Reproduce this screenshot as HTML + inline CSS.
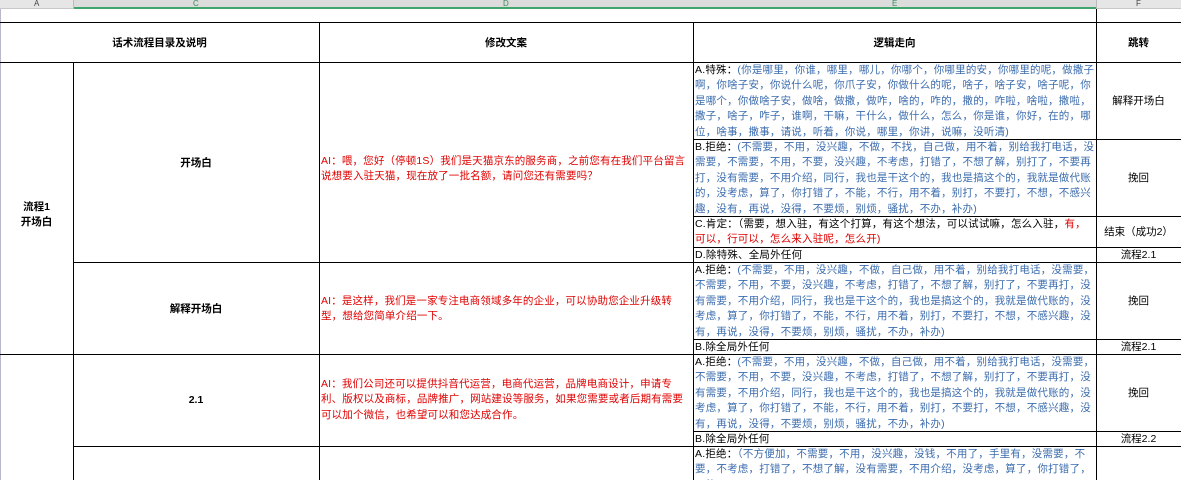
<!DOCTYPE html>
<html><head><meta charset="utf-8"><style>
*{margin:0;padding:0;box-sizing:border-box}
body{width:1181px;height:480px;overflow:hidden;background:#fff;font-family:"Liberation Sans","Noto Sans CJK SC",sans-serif;font-size:10.5px;color:#000;position:relative}
.a{position:absolute}
.h{position:absolute;height:1px;background:#000}
.v{position:absolute;width:1px;background:#000}
.c{position:absolute;display:flex;align-items:center;justify-content:center;text-align:center}
.e{position:absolute;left:695px;width:400px;line-height:15.4px;color:#3b6cae;letter-spacing:0.2px;overflow:hidden}
.k{color:#000}.r{color:#e00000}
.d{position:absolute;left:321px;width:370px;line-height:15.4px;color:#e00000;letter-spacing:0.15px}
b{font-weight:bold}
.hd{position:absolute;top:-1px;font-size:8px;line-height:9px}
</style></head><body>
<div class="a" style="left:0;top:0;width:1181px;height:9px;background:#e6e6e6;border-bottom:1px solid #c8c8c8"></div>
<div class="a" style="left:73px;top:0;width:1023px;height:9px;background:#dcdcdc;border-bottom:2px solid #3fa56a"></div>
<div class="hd" style="left:34px;color:#444">A</div>
<div class="hd" style="left:193px;color:#3a8a5a">C</div>
<div class="hd" style="left:503px;color:#3a8a5a">D</div>
<div class="hd" style="left:892px;color:#3a8a5a">E</div>
<div class="hd" style="left:1136px;color:#444">F</div>
<div class="v" style="left:1096px;top:0;height:9px;background:#bbb"></div>
<div class="v" style="left:73px;top:0;height:9px;background:#bbb"></div>
<div class="v" style="left:0;top:9px;height:471px;background:#b8b8cc"></div>

<div class="h" style="left:0;top:22px;width:1181px"></div>
<div class="h" style="left:0;top:62px;width:1181px"></div>
<div class="h" style="left:73px;top:262px;width:1108px"></div>
<div class="h" style="left:0;top:354px;width:1181px"></div>
<div class="h" style="left:73px;top:446px;width:1108px"></div>
<div class="h" style="left:693px;top:139px;width:488px"></div>
<div class="h" style="left:693px;top:216px;width:488px"></div>
<div class="h" style="left:693px;top:247px;width:488px"></div>
<div class="h" style="left:693px;top:339px;width:488px"></div>
<div class="h" style="left:693px;top:431px;width:488px"></div>
<div class="v" style="left:73px;top:62px;height:418px"></div>
<div class="v" style="left:319px;top:22px;height:458px"></div>
<div class="v" style="left:693px;top:22px;height:458px"></div>
<div class="v" style="left:1096px;top:9px;height:471px"></div>

<div class="c" style="left:0;top:22px;width:319px;height:40px"><b>话术流程目录及说明</b></div>
<div class="c" style="left:319px;top:22px;width:374px;height:40px"><b>修改文案</b></div>
<div class="c" style="left:693px;top:22px;width:403px;height:40px"><b>逻辑走向</b></div>
<div class="c" style="left:1096px;top:22px;width:85px;height:40px"><b>跳转</b></div>

<div class="c" style="left:0;top:62px;width:73px;height:306px;line-height:15px"><b>流程1<br>开场白</b></div>
<div class="c" style="left:73px;top:62px;width:246px;height:200px"><b>开场白</b></div>
<div class="c" style="left:73px;top:262px;width:246px;height:92px"><b>解释开场白</b></div>
<div class="c" style="left:73px;top:354px;width:246px;height:92px"><b>2.1</b></div>

<div class="d" style="top:154px">AI：喂，您好（停顿1S）我们是天猫京东的服务商，之前您有在我们平台留言说想要入驻天猫，现在放了一批名额，请问您还有需要吗？</div>
<div class="d" style="top:294px">AI：是这样，我们是一家专注电商领域多年的企业，可以协助您企业升级转型，想给您简单介绍一下。</div>
<div class="d" style="top:377px">AI：我们公司还可以提供抖音代运营，电商代运营，品牌电商设计，申请专利、版权以及商标，品牌推广，网站建设等服务，如果您需要或者后期有需要可以加个微信，也希望可以和您达成合作。</div>

<div class="e" style="top:63px"><span class="k">A.特殊：</span>(你是哪里，你谁，哪里，哪儿，你哪个，你哪里的安，你哪里的呢，做撒子啊，你啥子安，你说什么呢，你爪子安，你做什么的呢，啥子，啥子安，啥子呢，你是哪个，你做啥子安，做啥，做撒，做咋，啥的，咋的，撒的，咋啦，啥啦，撒啦，撒子，啥子，咋子，谁啊，干嘛，干什么，做什么，怎么，你是谁，你好，在的，哪位，啥事，撒事，请说，听着，你说，哪里，你讲，说嘛，没听清)</div>
<div class="e" style="top:140px"><span class="k">B.拒绝：</span>(不需要，不用，没兴趣，不做，不找，自己做，用不着，别给我打电话，没需要，不需要，不用，不要，没兴趣，不考虑，打错了，不想了解，别打了，不要再打，没有需要，不用介绍，同行，我也是干这个的，我也是搞这个的，我就是做代账的，没考虑，算了，你打错了，不能，不行，用不着，别打，不要打，不想，不感兴趣，没有，再说，没得，不要烦，别烦，骚扰，不办，补办)</div>
<div class="e k" style="top:217px">C.肯定：（需要，想入驻，有这个打算，有这个想法，可以试试嘛，怎么入驻，<span class="r">有，可以，行可以，怎么来入驻呢，怎么开)</span></div>
<div class="e k" style="top:248px">D.除特殊、全局外任何</div>
<div class="e" style="top:263px"><span class="k">A.拒绝：</span>(不需要，不用，没兴趣，不做，自己做，用不着，别给我打电话，没需要，不需要，不用，不要，没兴趣，不考虑，打错了，不想了解，别打了，不要再打，没有需要，不用介绍，同行，我也是干这个的，我也是搞这个的，我就是做代账的，没考虑，算了，你打错了，不能，不行，用不着，别打，不要打，不想，不感兴趣，没有，再说，没得，不要烦，别烦，骚扰，不办，补办)</div>
<div class="e k" style="top:340px">B.除全局外任何</div>
<div class="e" style="top:355px"><span class="k">A.拒绝：</span>(不需要，不用，没兴趣，不做，自己做，用不着，别给我打电话，没需要，不需要，不用，不要，没兴趣，不考虑，打错了，不想了解，别打了，不要再打，没有需要，不用介绍，同行，我也是干这个的，我也是搞这个的，我就是做代账的，没考虑，算了，你打错了，不能，不行，用不着，别打，不要打，不想，不感兴趣，没有，再说，没得，不要烦，别烦，骚扰，不办，补办)</div>
<div class="e k" style="top:432px">B.除全局外任何</div>
<div class="e" style="top:447px;height:33px"><span class="k">A.拒绝：</span>（不方便加，不需要，不用，没兴趣，没钱，不用了，手里有，没需要，不要，不考虑，打错了，不想了解，没有需要，不用介绍，没考虑，算了，你打错了，不能，不</div>

<div class="c" style="left:1096px;top:62px;width:85px;height:77px">解释开场白</div>
<div class="c" style="left:1096px;top:139px;width:85px;height:77px">挽回</div>
<div class="c" style="left:1096px;top:216px;width:85px;height:31px">结束（成功2）</div>
<div class="c" style="left:1096px;top:247px;width:85px;height:15px">流程2.1</div>
<div class="c" style="left:1096px;top:262px;width:85px;height:77px">挽回</div>
<div class="c" style="left:1096px;top:339px;width:85px;height:15px">流程2.1</div>
<div class="c" style="left:1096px;top:354px;width:85px;height:77px">挽回</div>
<div class="c" style="left:1096px;top:431px;width:85px;height:15px">流程2.2</div>
</body></html>
